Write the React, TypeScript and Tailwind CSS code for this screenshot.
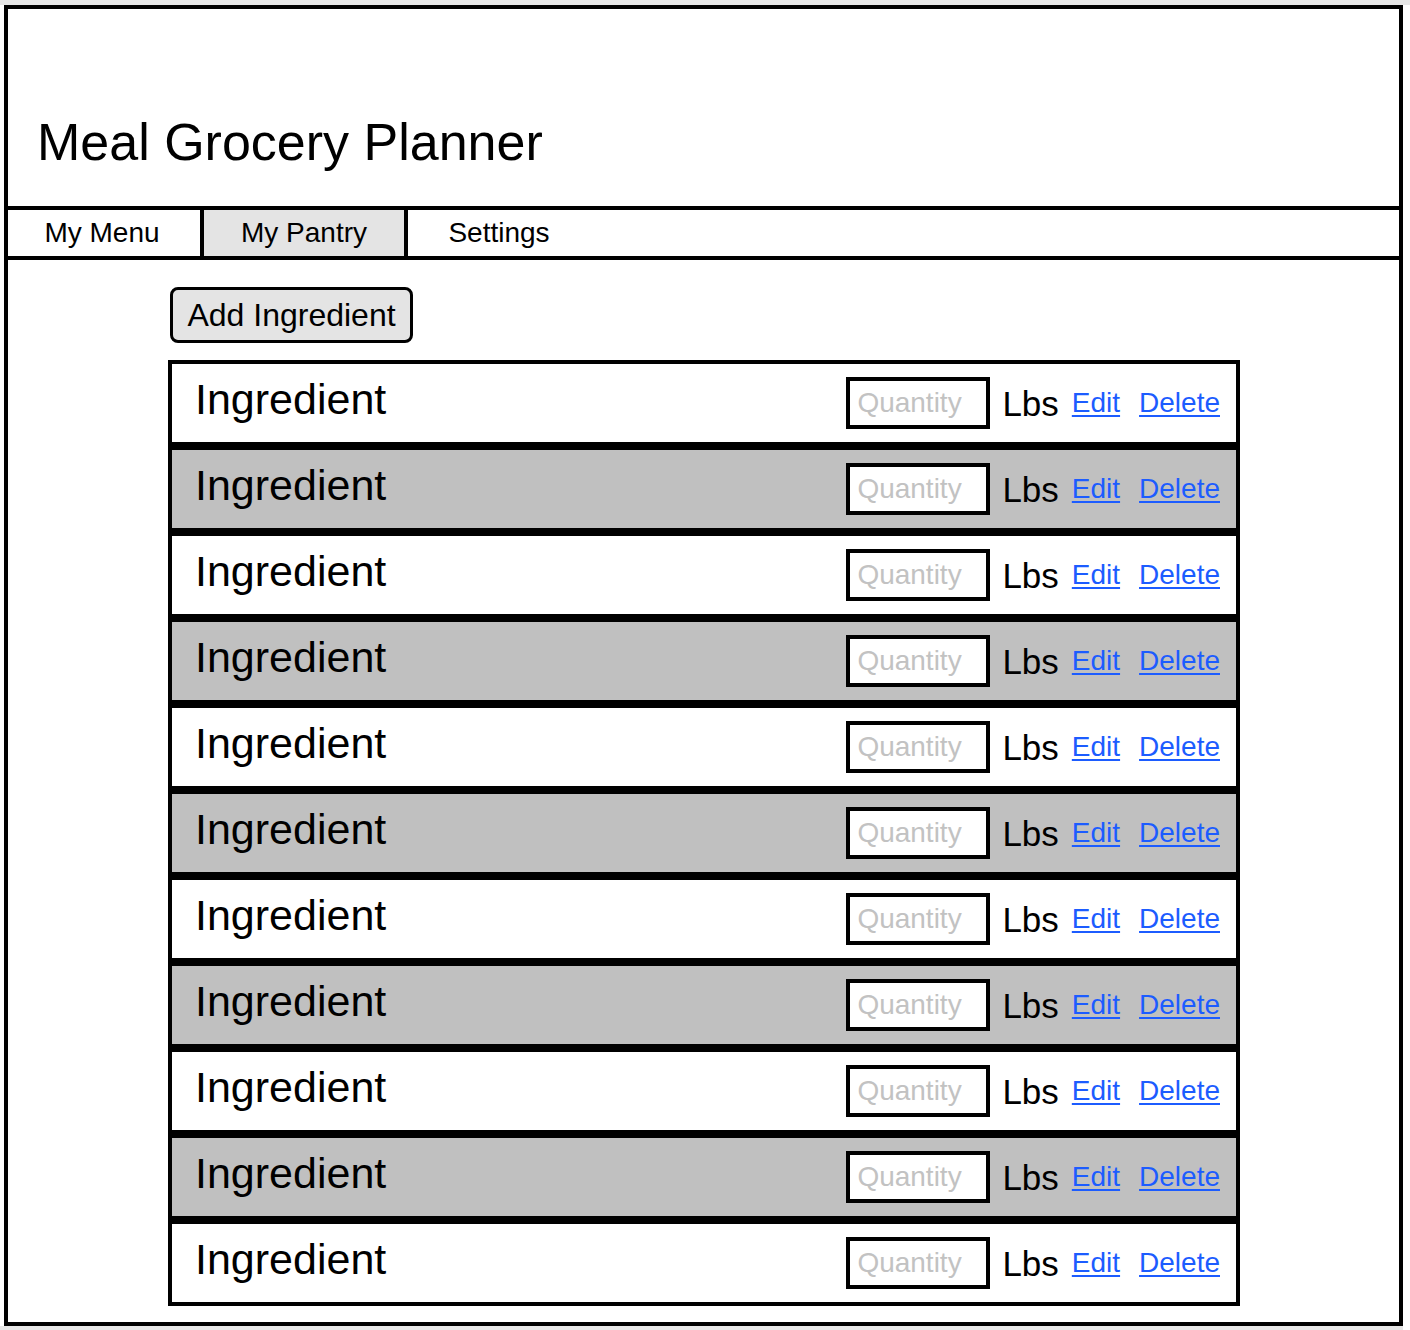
import React from 'react';

const rows = Array.from({ length: 11 }, (_, i) => i);

function IngredientRow({ shaded, first }: { shaded: boolean; first: boolean }) {
  return (
    <div
      className={`flex h-[78px] items-center pl-[23px] pr-[16px] ${shaded ? 'bg-[#c0c0c0]' : 'bg-white'} ${first ? '' : 'border-t-[8px] border-black box-content'}`}
    >
      <span className="pb-[8px] text-[43px] leading-none text-black">Ingredient</span>
      <div className="ml-auto flex items-center">
        <input
          type="text"
          placeholder="Quantity"
          className="h-[52px] w-[144px] border-4 border-black bg-white px-[7px] text-[28px] leading-none text-black outline-none placeholder:text-[#c2c2c2]"
        />
        <span className="ml-[12px] text-[35px] leading-none text-black">Lbs</span>
        <a href="#" className="ml-[13px] text-[28px] leading-none text-[#1c5cff] underline decoration-2 underline-offset-[3px]">
          Edit
        </a>
        <a href="#" className="ml-[19px] text-[28px] leading-none text-[#1c5cff] underline decoration-2 underline-offset-[3px]">
          Delete
        </a>
      </div>
    </div>
  );
}

export default function App() {
  return (
    <div className="h-[1330px] w-[1410px] bg-white font-['Liberation_Sans',Arial,sans-serif]">
      <div className="h-[5px] bg-[#e6e6e6]" />
      <div className="ml-[4px] h-[1321px] w-[1399px] border-4 border-black">
        {/* header */}
        <div className="h-[197px] pl-[29px] pt-[107px]">
          <h1 className="text-[52px] leading-none text-black">Meal Grocery Planner</h1>
        </div>

        {/* tabs */}
        <nav className="flex h-[54px] border-y-4 border-black text-[28px] text-black">
          <div className="flex w-[196px] items-center justify-center border-r-4 border-black pr-[4px]">My Menu</div>
          <div className="flex w-[204px] items-center justify-center border-r-4 border-black bg-[#e4e4e4]">My Pantry</div>
          <div className="flex w-[182px] items-center justify-center">Settings</div>
        </nav>

        {/* pantry */}
        <div className="pl-[160px] pt-[27px]">
          <button
            type="button"
            className="ml-[2px] h-[56px] w-[243px] rounded-[8px] border-[3px] border-black bg-[#e4e4e4] text-[32px] leading-none text-black"
          >
            Add Ingredient
          </button>
          <div className="mt-[17px] w-[1072px] border-4 border-black">
            {rows.map((i) => (
              <IngredientRow key={i} shaded={i % 2 === 1} first={i === 0} />
            ))}
          </div>
        </div>
      </div>
      <div className="h-[4px] w-[1403px] bg-[#e6e6e6]" />
    </div>
  );
}
